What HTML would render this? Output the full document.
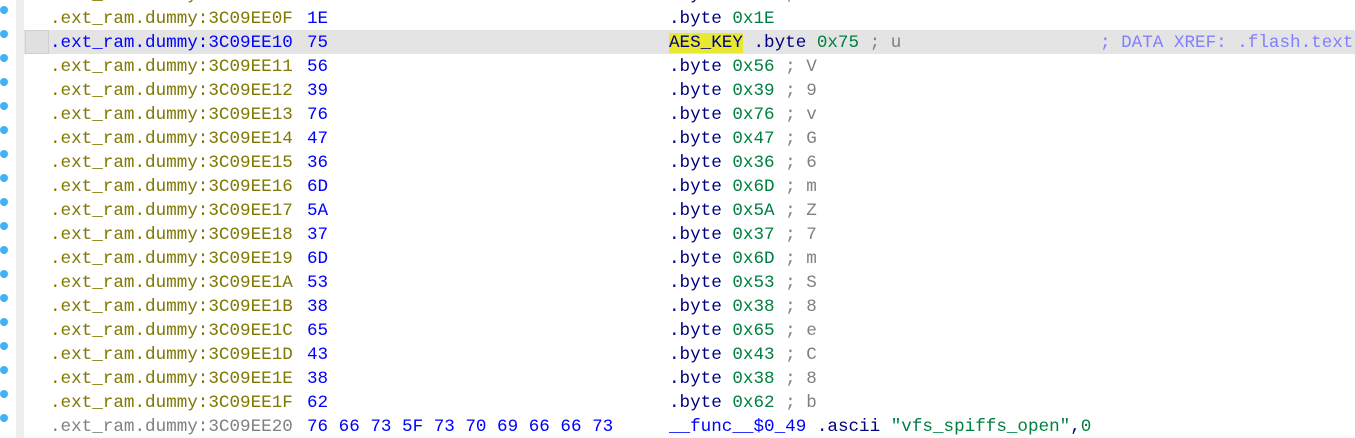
<!DOCTYPE html>
<html><head><meta charset="utf-8"><style>
html,body{margin:0;padding:0;width:1355px;height:438px;overflow:hidden;background:#fff}
body{font-family:"Liberation Mono","DejaVu Sans Mono",monospace;font-size:17.6px;position:relative}
.gut{position:absolute;left:16px;top:0;width:8px;height:438px;background:#eeeeee}
.dot{position:absolute;left:0;width:8px;height:8px;border-radius:50%;background:#3cb4f5}
.hl{position:absolute;left:24px;top:30px;width:1331px;height:24px;background:#e4e4e4}
.hlb{position:absolute;left:25px;top:30px;width:22px;height:22px;background:#e0e0e0;border:1px solid #cfcfcf}
.r{position:absolute;left:0;height:24px;line-height:24px;white-space:pre;width:1355px}
.r span{position:absolute;top:0}
.r i{font-style:normal}
.a{left:50px;color:#807800}
.ag{left:50px;color:#808080}
.ab{left:50px;color:#0000ff}
.h{left:307px;color:#0000ff}
.i{left:669px;color:#000080}
.n{color:#008040}
.c{color:#808080}
.x{left:1100px;color:#8080ff}
.k{background:#e8e830;color:#000080}
.f{color:#0000ff}
.s{color:#008040}
</style></head><body>
<div class="gut"></div>
<div class="hl"></div><div class="hlb"></div>
<div class="r" style="top:-17px"><span class="a">.ext_ram.dummy:3C09EE0E</span><span class="h">38</span><span class="i">.byte <i class="n">0x38</i> <i class="c">; 8</i></span></div>
<div class="r" style="top:7px"><span class="a">.ext_ram.dummy:3C09EE0F</span><span class="h">1E</span><span class="i">.byte <i class="n">0x1E</i></span></div>
<div class="r" style="top:31px"><span class="ab">.ext_ram.dummy:3C09EE10</span><span class="h">75</span><span class="i"><i class="k">AES_KEY</i> .byte <i class="n">0x75</i> <i class="c">; u</i></span><span class="x">; DATA XREF: .flash.text</span></div>
<div class="r" style="top:55px"><span class="a">.ext_ram.dummy:3C09EE11</span><span class="h">56</span><span class="i">.byte <i class="n">0x56</i> <i class="c">; V</i></span></div>
<div class="r" style="top:79px"><span class="a">.ext_ram.dummy:3C09EE12</span><span class="h">39</span><span class="i">.byte <i class="n">0x39</i> <i class="c">; 9</i></span></div>
<div class="r" style="top:103px"><span class="a">.ext_ram.dummy:3C09EE13</span><span class="h">76</span><span class="i">.byte <i class="n">0x76</i> <i class="c">; v</i></span></div>
<div class="r" style="top:127px"><span class="a">.ext_ram.dummy:3C09EE14</span><span class="h">47</span><span class="i">.byte <i class="n">0x47</i> <i class="c">; G</i></span></div>
<div class="r" style="top:151px"><span class="a">.ext_ram.dummy:3C09EE15</span><span class="h">36</span><span class="i">.byte <i class="n">0x36</i> <i class="c">; 6</i></span></div>
<div class="r" style="top:175px"><span class="a">.ext_ram.dummy:3C09EE16</span><span class="h">6D</span><span class="i">.byte <i class="n">0x6D</i> <i class="c">; m</i></span></div>
<div class="r" style="top:199px"><span class="a">.ext_ram.dummy:3C09EE17</span><span class="h">5A</span><span class="i">.byte <i class="n">0x5A</i> <i class="c">; Z</i></span></div>
<div class="r" style="top:223px"><span class="a">.ext_ram.dummy:3C09EE18</span><span class="h">37</span><span class="i">.byte <i class="n">0x37</i> <i class="c">; 7</i></span></div>
<div class="r" style="top:247px"><span class="a">.ext_ram.dummy:3C09EE19</span><span class="h">6D</span><span class="i">.byte <i class="n">0x6D</i> <i class="c">; m</i></span></div>
<div class="r" style="top:271px"><span class="a">.ext_ram.dummy:3C09EE1A</span><span class="h">53</span><span class="i">.byte <i class="n">0x53</i> <i class="c">; S</i></span></div>
<div class="r" style="top:295px"><span class="a">.ext_ram.dummy:3C09EE1B</span><span class="h">38</span><span class="i">.byte <i class="n">0x38</i> <i class="c">; 8</i></span></div>
<div class="r" style="top:319px"><span class="a">.ext_ram.dummy:3C09EE1C</span><span class="h">65</span><span class="i">.byte <i class="n">0x65</i> <i class="c">; e</i></span></div>
<div class="r" style="top:343px"><span class="a">.ext_ram.dummy:3C09EE1D</span><span class="h">43</span><span class="i">.byte <i class="n">0x43</i> <i class="c">; C</i></span></div>
<div class="r" style="top:367px"><span class="a">.ext_ram.dummy:3C09EE1E</span><span class="h">38</span><span class="i">.byte <i class="n">0x38</i> <i class="c">; 8</i></span></div>
<div class="r" style="top:391px"><span class="a">.ext_ram.dummy:3C09EE1F</span><span class="h">62</span><span class="i">.byte <i class="n">0x62</i> <i class="c">; b</i></span></div>
<div class="r" style="top:415px"><span class="ag">.ext_ram.dummy:3C09EE20</span><span class="h">76 66 73 5F 73 70 69 66 66 73</span><span class="i"><i class="f">__func__$0_49</i> .ascii <i class="s">"vfs_spiffs_open"</i>,<i class="s">0</i></span></div>
<div class="dot" style="top:6px"></div>
<div class="dot" style="top:30px"></div>
<div class="dot" style="top:54px"></div>
<div class="dot" style="top:78px"></div>
<div class="dot" style="top:102px"></div>
<div class="dot" style="top:126px"></div>
<div class="dot" style="top:150px"></div>
<div class="dot" style="top:174px"></div>
<div class="dot" style="top:198px"></div>
<div class="dot" style="top:222px"></div>
<div class="dot" style="top:246px"></div>
<div class="dot" style="top:270px"></div>
<div class="dot" style="top:294px"></div>
<div class="dot" style="top:318px"></div>
<div class="dot" style="top:342px"></div>
<div class="dot" style="top:366px"></div>
<div class="dot" style="top:390px"></div>
<div class="dot" style="top:414px"></div>
</body></html>
